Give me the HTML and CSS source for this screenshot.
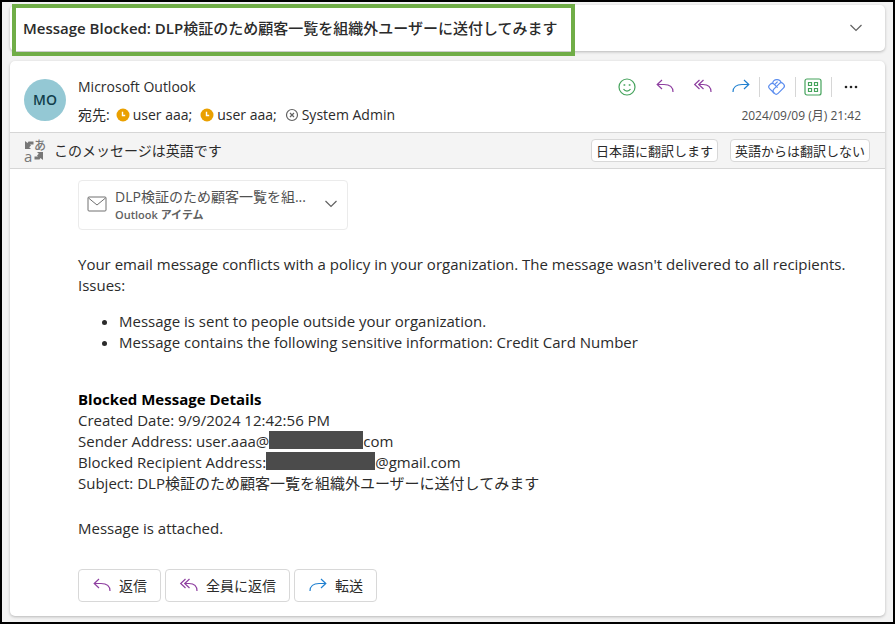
FILE: index.html
```html
<!DOCTYPE html>
<html lang="ja">
<head>
    <meta charset="UTF-8">
    <meta name="viewport" content="width=device-width, initial-scale=1.0">
    <title>Message Blocked</title>
    <link rel="stylesheet" href="styles.css">
</head>
<body>
    <!-- Shared icons -->
    <svg class="sprite" aria-hidden="true">
        <symbol id="reply" viewBox="0 0 20 20"><path d="M7 3 2.2 7.5 7 12M2.2 7.5H9c5.500 0 9 2.500 9 7.500"/></symbol>
        <symbol id="reply-all" viewBox="0 0 20 20"><path d="M6.500 3 1.700 7.500l4.800 4.500M10.500 3 5.700 7.500l4.800 4.500M5.700 7.500H10c5 0 8 2.500 8 7.500"/></symbol>
        <symbol id="forward" viewBox="0 0 20 20"><path d="M13 3l4.800 4.500L13 12M17.800 7.500H11c-5.500 0-9 2.500-9 7.500"/></symbol>
        <symbol id="chevron" viewBox="0 0 14 14"><path d="M1.500 4 7 9.500 12.500 4"/></symbol>
        <symbol id="clock" viewBox="0 0 14 14"><circle cx="7" cy="7" r="6.500" fill="#eaa000" stroke="none"/><path d="M6.500 3.700v3.800h2.700" stroke="#fff" stroke-width="1.400"/></symbol>
    </svg>

    <header class="card subject">
        <h1>Message Blocked: DLP<span class="jp">検証のため顧客一覧を組織外ユーザーに送付してみます</span></h1>
        <button class="icon-btn gray" aria-label="展開"><svg class="chevron"><use href="#chevron"/></svg></button>
    </header>

    <main class="card message">
        <section class="message-header">
            <div class="avatar">MO</div>
            <div class="people">
                <p class="sender">Microsoft Outlook</p>
                <p class="recipients">
                    <span class="to">宛先:</span>
                    <span class="person"><svg class="presence"><use href="#clock"/></svg>user aaa;</span>
                    <span class="person"><svg class="presence"><use href="#clock"/></svg>user aaa;</span>
                    <span class="person"><svg class="presence offline" viewBox="0 0 14 14"><circle cx="7" cy="7" r="5.500"/><path d="m5 5 4 4M9 5 5 9"/></svg>System Admin</span>
                </p>
            </div>
            <div class="actions">
                <div class="toolbar">
                    <button class="icon-btn green" aria-label="リアクション">
                        <svg viewBox="0 0 20 20"><circle cx="10" cy="10" r="8"/><path d="M6.500 12c1.700 2.700 5.300 2.700 7 0"/><path d="M7.400 7.200v1.600M12.600 7.200v1.600" stroke-width="1.700"/></svg>
                    </button>
                    <button class="icon-btn purple" aria-label="返信"><svg><use href="#reply"/></svg></button>
                    <button class="icon-btn purple" aria-label="全員に返信"><svg><use href="#reply-all"/></svg></button>
                    <button class="icon-btn blue" aria-label="転送"><svg><use href="#forward"/></svg></button>
                    <button class="icon-btn loop divided" aria-label="Loop">
                        <svg viewBox="0 0 20 20"><rect x="5.200" y="8.500" width="13" height="6" rx="2.600" transform="rotate(-45 11.700 11.500)"/><path d="M7.300 16.300 2.500 11.600a2.500 2.500 0 0 1 0-3.500l1-1a2.500 2.500 0 0 1 3.500 0l3.600 3.600M5.600 6.300a4.400 4.400 0 0 1 8.600-.4M7.600 7.600l3-3"/></svg>
                    </button>
                    <button class="icon-btn green divided" aria-label="アプリ">
                        <svg viewBox="0 0 20 20"><rect x="2" y="2" width="16" height="16" rx="2"/><path d="M5.500 5.500h3v3h-3zM11.500 5.500h3v3h-3zM5.500 11.500h3v3h-3zM11.500 11.500h3v3h-3z"/></svg>
                    </button>
                    <button class="icon-btn more divided" aria-label="その他の操作">
                        <svg viewBox="0 0 20 20"><circle cx="5" cy="10" r="1.300"/><circle cx="10" cy="10" r="1.300"/><circle cx="15" cy="10" r="1.300"/></svg>
                    </button>
                </div>
                <time datetime="2024-09-09T21:42">2024/09/09 (月) 21:42</time>
            </div>
        </section>

        <section class="translate">
            <span class="translate-icon" aria-hidden="true">
                <svg viewBox="0 0 10 10"><path d="M1 1v8h6L5.200 7.200 7 5.500 6 4.500h3.500v-3H4.500L3.500 3z"/></svg>
                <b>あ</b>
                <b class="latin">a</b>
                <svg viewBox="0 0 10 10"><path d="M9 9V1H3l1.800 1.800L3 4.500l1 1H.5v3h5l1-1.500z"/></svg>
            </span>
            <p>このメッセージは英語です</p>
            <button>日本語に翻訳します</button>
            <button>英語からは翻訳しない</button>
        </section>

        <section class="content">
            <div class="attachment">
                <svg class="mail" viewBox="0 0 20 16"><rect x="1" y="1" width="18" height="14" rx="1"/><path d="m1.500 2 8.500 7 8.500-7"/></svg>
                <div class="file">
                    <p class="file-name">DLP検証のため顧客一覧を組...</p>
                    <p class="file-type">Outlook アイテム</p>
                </div>
                <button class="icon-btn gray" aria-label="添付ファイルのメニュー"><svg class="chevron"><use href="#chevron"/></svg></button>
            </div>

            <div class="mail-text">
                <p>Your email message conflicts with a policy in your organization. The message wasn't delivered to all recipients.</p>
                <p>Issues:</p>
                <ul>
                    <li>Message is sent to people outside your organization.</li>
                    <li>Message contains the following sensitive information: Credit Card Number</li>
                </ul>

                <h2>Blocked Message Details</h2>
                <p>Created Date: 9/9/2024 12:42:56 PM</p>
                <p>Sender Address: user.aaa@<span class="redacted"></span>com</p>
                <p>Blocked Recipient Address:<span class="redacted wide"></span>@gmail.com</p>
                <p>Subject: DLP検証のため顧客一覧を組織外ユーザーに送付してみます</p>
                <p class="note">Message is attached.</p>
            </div>

            <div class="replies">
                <button><svg class="purple"><use href="#reply"/></svg>返信</button>
                <button><svg class="purple"><use href="#reply-all"/></svg>全員に返信</button>
                <button><svg class="blue"><use href="#forward"/></svg>転送</button>
            </div>
        </section>
    </main>
</body>
</html>
```
FILE: styles.css
```css
* { box-sizing: border-box; }
html { min-height: 100%; display: grid; }
body {
    margin: 0;
    padding: 3px 8px 6px 8px;
    border: 2px solid #000;
    background-color: #f3f3f3;
    color: #2b2b2b;
    font-family: "Open Sans", "Noto Sans CJK JP", sans-serif;
    font-size: 14px;
    line-height: 21px;
}
h1, h2, p, ul { margin: 0; }
button {
    font: inherit;
    color: inherit;
    background-color: #fff;
    border: 1px solid #d8d8d8;
    border-radius: 4px;
}
svg {
    width: 20px;
    height: 20px;
    fill: none;
    stroke: currentColor;
    stroke-width: 1.2;
    flex: none;
}
.sprite { position: absolute; width: 0; height: 0; }
.card {
    background-color: #fff;
    border-radius: 5px;
    box-shadow: 0 1px 3px #00000040;
}
.icon-btn {
    display: flex;
    padding: 0;
    border: 0;
    background: none;
}
.chevron { width: 14px; height: 14px; }
.gray { color: #616161; }
.green { color: #45a35c; }
.purple { color: #8e3fa0; }
.blue { color: #2080d0; }
.loop { color: #5b8def; }

/* Subject */
.subject {
    display: flex;
    align-items: center;
    justify-content: space-between;
    height: 46px;
    padding: 0 22px 0 13px;
    margin-bottom: 10px;
}
h1 {
    position: relative;
    font-size: 15px;
    font-weight: 600;
    line-height: 24px;
}
h1 .jp { font-weight: 500; }
h1::after {
    content: "";
    position: absolute;
    inset: -12px -17px -16px -11px;
    border: 4px solid #70ad47;
}

/* Sender, recipients and toolbar */
.message-header {
    display: flex;
    padding: 15px 14px 6px;
    border-bottom: 1px solid #d6d6d6;
}
.avatar {
    width: 42px;
    height: 42px;
    margin: 3px 12px 0 0;
    border-radius: 50%;
    background-color: #94c8d4;
    color: #123f4c;
    font-weight: 600;
    line-height: 42px;
    text-align: center;
}
.people { flex: 1; }
.sender { margin-bottom: 7px; }
.recipients, .person { display: flex; align-items: center; }
.recipients { gap: 8px; }
.person { gap: 3px; }
.to { margin-right: -2px; }
.presence { width: 14px; height: 14px; }
.offline { color: #616161; }
.actions {
    display: flex;
    flex-direction: column;
    align-items: flex-end;
    gap: 8px;
    padding: 1px 10px 0 0;
}
.toolbar { display: flex; }
.toolbar .icon-btn { margin-right: 18px; }
.toolbar .divided {
    padding-left: 7px;
    margin-right: 8px;
    border-left: 1px solid #d6d6d6;
    border-radius: 0;
}
.toolbar .blue { margin-right: 8px; }
.toolbar .more { padding-left: 9px; margin-right: 0; }
.more svg { fill: #242424; stroke: none; }
time { font-size: 12px; color: #505050; }

/* Translation bar */
.translate {
    display: flex;
    align-items: center;
    height: 36px;
    padding: 0 15px 0 14px;
    border-bottom: 1px solid #d6d6d6;
    background-color: #f4f4f4;
}
.translate p { flex: 1; }
.translate button {
    height: 23px;
    margin-left: 12px;
    padding: 0 4px;
    font-size: 13px;
    line-height: 20px;
}
.translate-icon {
    display: grid;
    grid-template-columns: 10px 12px;
    align-items: center;
    margin-right: 8px;
    color: #777;
    line-height: 11px;
}
.translate-icon b { font-size: 12px; font-weight: 500; }
.translate-icon .latin { font-size: 15px; }
.translate-icon svg { width: 10px; height: 10px; fill: #777; stroke: none; }

/* Message body */
.content { padding: 11px 14px 14px 68px; }
.attachment {
    display: flex;
    align-items: center;
    width: 270px;
    height: 50px;
    margin-bottom: 24px;
    padding: 0 9px 2px 8px;
    border: 1px solid #ebebeb;
    border-radius: 4px;
}
.mail { height: 16px; margin-right: 8px; color: #707070; stroke-width: 1; }
.file { flex: 1; }
.file-name { line-height: 20px; color: #505050; }
.file-type { font-size: 11px; line-height: 15px; font-weight: 600; color: #616161; }
.mail-text { font-size: 15px; }
ul { padding: 0 0 0 41px; margin: 15px 0 36px; }
h2 { font-size: 15px; font-weight: 700; color: #000; }
.redacted {
    display: inline-block;
    width: 94px;
    height: 18px;
    background-color: #4b4b4b;
    vertical-align: top;
}
.wide { width: 109px; }
.note { margin: 24px 0 30px; }
.replies { display: flex; gap: 4px; }
.replies button {
    display: flex;
    align-items: center;
    gap: 7px;
    height: 33px;
    padding: 0 13px;
}
```
